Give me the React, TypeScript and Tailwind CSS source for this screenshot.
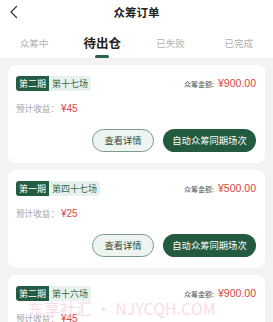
import React from 'react';

interface Order {
  period: string;
  session: string;
  amount: string;
  income: string;
}

const orders: Order[] = [
  { period: '第二期', session: '第十七场', amount: '¥900.00', income: '¥45' },
  { period: '第一期', session: '第四十七场', amount: '¥500.00', income: '¥25' },
  { period: '第二期', session: '第十六场', amount: '¥900.00', income: '¥45' },
];

const tabs = ['众筹中', '待出仓', '已失败', '已完成'];

function OrderCard({ order }: { order: Order }) {
  return (
    <div className="bg-white rounded-[8px] px-[8px] pt-[11px] h-[98px] shrink-0">
      <div className="flex items-center justify-between h-[15px]">
        <div className="flex items-stretch h-[15px] text-[9px] leading-[15px]">
          <span className="bg-[#255d43] text-white px-[3px] rounded-l-[3px]">{order.period}</span>
          <span className="bg-[#e9f1ec] text-[#2f6a4e] px-[3px] rounded-r-[3px]">{order.session}</span>
        </div>
        <div className="flex items-baseline pr-[1px]">
          <span className="text-[7px] text-[#555]">众筹金额:</span>
          <span className="text-[10.5px] text-[#d8463f] ml-[4px]" style={{ fontFamily: '"Liberation Sans", sans-serif' }}>
            {order.amount}
          </span>
        </div>
      </div>
      <div className="flex items-baseline mt-[10px] h-[14px] leading-[14px]">
        <span className="text-[8.6px] text-[#a5a5a5]">预计收益：</span>
        <span className="text-[10px] text-[#d8463f] ml-[2px]" style={{ fontFamily: '"Liberation Sans", sans-serif' }}>
          {order.income}
        </span>
      </div>
      <div className="flex justify-end gap-[9px] mt-[14px] pr-[1px]">
        <button className="h-[23px] w-[62px] rounded-full border border-[#7d9a8b] bg-[#eef4f0] text-[9.3px] text-[#2c4a3b] leading-none">
          查看详情
        </button>
        <button className="h-[23px] w-[93px] rounded-full bg-[#235b41] text-[9.3px] text-white leading-none">
          自动众筹同期场次
        </button>
      </div>
    </div>
  );
}

export default function App() {
  return (
    <div
      className="relative w-[273px] h-[322px] overflow-hidden bg-[#f3f3f3]"
      style={{ fontFamily: '"Noto Sans CJK SC", "Noto Sans", sans-serif' }}
    >
      {/* Header */}
      <div className="bg-white h-[59px] border-b border-[#ececec]">
        <div className="relative flex items-center justify-center h-[26px]">
          <svg className="absolute left-[9px] top-[5px]" width="10" height="14" viewBox="0 0 10 14" fill="none">
            <path d="M7.5 1.5 L2 7 L7.5 12.5" stroke="#333" strokeWidth="1.2" strokeLinecap="round" strokeLinejoin="round" />
          </svg>
          <span className="text-[11.5px] font-bold text-[#222]">众筹订单</span>
        </div>
        <div className="grid grid-cols-4 h-[33px]">
          {tabs.map((t, i) => (
            <div key={t} className="relative flex justify-center items-center h-[24px] mt-[5px]">
              <span
                className={
                  i === 1
                    ? 'text-[12.5px] font-bold text-[#222]'
                    : 'text-[9.5px] text-[#b0b0b0]'
                }
              >
                {t}
              </span>
              {i === 1 && (
                <span className="absolute top-[24px] w-[14px] h-[2.5px] rounded-full bg-[#2b6349]" />
              )}
            </div>
          ))}
        </div>
      </div>

      {/* Cards */}
      <div className="flex flex-col gap-[7px] px-[8px] pt-[6px]">
        {orders.map((o, i) => (
          <OrderCard key={i} order={o} />
        ))}
      </div>

      {/* Watermark */}
      <div className="absolute left-[28px] top-[296px] text-[16px] text-[#f6c4da] opacity-60 whitespace-nowrap pointer-events-none">
        东享社汇 • NJYCQH.COM
      </div>
    </div>
  );
}
